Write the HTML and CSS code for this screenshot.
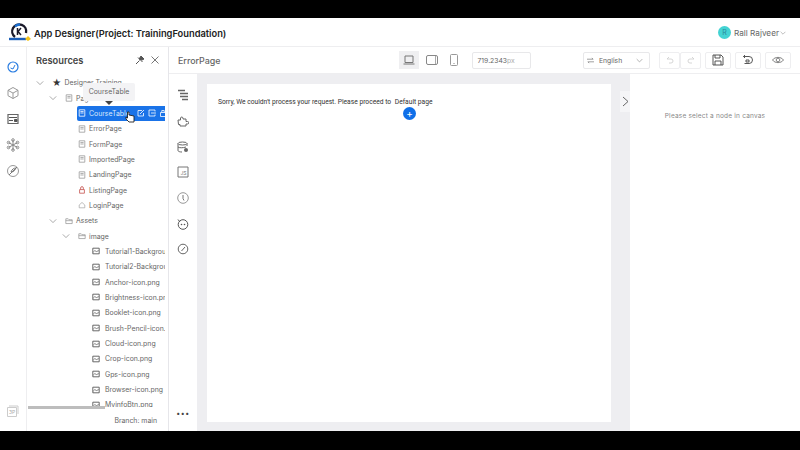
FILE: index.html
```html
<!DOCTYPE html>
<html>
<head lang="en">
    <meta charset="UTF-8">
    <title>App Designer</title>
    <link rel="stylesheet" href="styles.css">
</head>
<body>
<svg class="defs" width="0" height="0">
    <symbol id="chev" viewBox="0 0 10 10"><path d="M1 3l4 4 4-4" fill="none" stroke="#888" stroke-width=".9"/></symbol>
    <symbol id="page" viewBox="0 0 10 10"><path d="M1.500 1h7v8h-7zM3 3.200h4M3 5h4" fill="none" stroke="#999" stroke-width="1"/></symbol>
    <symbol id="folder" viewBox="0 0 10 10"><path d="M1 2.200h3l1 1.200h4v4.800H1zM1 4.600h8" fill="none" stroke="#888" stroke-width=".8"/></symbol>
    <symbol id="img" viewBox="0 0 10 10"><path d="M1 1.500h8v7H1z" fill="none" stroke="#555" stroke-width="1.100"/><path d="M1.500 6.500l2-2 2 1.200 3-1.200" fill="none" stroke="#666" stroke-width="1"/></symbol>
</svg>
<div class="bar"></div>
<div class="app">
    <header class="top">
        <svg class="logo" width="24" height="20" viewBox="0 0 24 20">
            <path d="M7 15a7 7 0 1 1 11-4" fill="none" stroke="#1a1a2a" stroke-width="2.400"/>
            <path d="M1 17h17" stroke="#1c5fb8" stroke-width="2.400"/>
            <path d="M7 4.500 a7 7 0 0 1 5-2" fill="none" stroke="#1c6fd0" stroke-width="2.400"/>
            <path d="M9.500 6v7M13 6l-3 3.500 3 3.500" fill="none" stroke="#1a1a2a" stroke-width="1.500"/>
            <path d="M17 17l3-3 3 3-3 2z" fill="#f2c21a"/>
        </svg>
        <h1 class="title">App Designer(Project: TrainingFoundation)</h1>
        <div class="user">
            <span class="avatar">R</span>
            <span class="user-name">Rall Rajveer</span>
            <svg width="6" height="6"><use href="#chev"/></svg>
        </div>
    </header>
    <div class="main">
        <nav class="rail">
            <svg class="rail-ico" width="14" height="14" viewBox="0 0 14 14"><circle cx="7" cy="7" r="5" fill="none" stroke="#2a7de1" stroke-width="1.200"/><path d="M4.500 8L7 9l2-4" fill="none" stroke="#2a7de1"/></svg>
            <svg class="rail-ico" width="14" height="14" viewBox="0 0 14 14"><path d="M7 1.500l5 2.800v5.400l-5 2.800-5-2.800V4.300zM2 4.300l5 2.800 5-2.800M7 7.100v5.400" fill="none" stroke="#999"/></svg>
            <svg class="rail-ico" width="14" height="14" viewBox="0 0 14 14"><path d="M2 2.500h10v9H2z" fill="none" stroke="#666" stroke-width="1.200"/><path d="M3 5.500h8M3 8.500h4M8.500 7.500h2.500v2H8.500z" stroke="#555" fill="#555" stroke-width="1"/></svg>
            <svg class="rail-ico" width="14" height="14" viewBox="0 0 14 14"><path d="M7 2v10M2.500 4.500l9 5M11.500 4.500l-9 5" stroke="#888"/><g fill="none" stroke="#777" stroke-width=".8"><circle cx="7" cy="2" r="1.300"/><circle cx="7" cy="12" r="1.300"/><circle cx="2.500" cy="4.500" r="1.300"/><circle cx="11.500" cy="4.500" r="1.300"/><circle cx="2.500" cy="9.500" r="1.300"/><circle cx="11.500" cy="9.500" r="1.300"/></g></svg>
            <svg class="rail-ico" width="14" height="14" viewBox="0 0 14 14"><circle cx="7" cy="7" r="5.500" fill="none" stroke="#999"/><path d="M3 11l8-8M5 8c1-3 3-4 5-4-1 2-2 4-5 4z" fill="none" stroke="#777"/></svg>
            <svg class="rail-ver" width="14" height="14" viewBox="0 0 14 14"><path d="M3 2h9v8" fill="none" stroke="#ccc"/><path d="M1.500 3.500h9v9h-9z" fill="#fff" stroke="#ccc"/><text x="3" y="10" font-size="5" fill="#aaa">3P</text></svg>
        </nav>
        <aside class="res">
            <div class="res-head">
                <h2>Resources</h2>
                <svg width="10" height="10" viewBox="0 0 10 10"><path d="M1 9l3.500-3.500M3 2.500l4.500 4.500M6 1l3 3-2 1-3-1z" stroke="#555" fill="#555"/></svg>
                <svg width="10" height="10" viewBox="0 0 10 10"><path d="M1.500 1.500l7 7M8.500 1.500l-7 7" stroke="#777"/></svg>
            </div>
            <div class="tree">
                <div class="row lvl0"><svg class="chev"><use href="#chev"/></svg><span class="star">★</span><span>Designer Training</span></div>
                <div class="row lvl1"><svg class="chev"><use href="#chev"/></svg><svg class="ico"><use href="#page"/></svg><span>Pages</span></div>
                <div class="row leaf sel"><svg class="ico"><use href="#page"/></svg><span class="sel-name">CourseTable</span>
                    <svg class="act" viewBox="0 0 8 8"><path d="M1 1.500h4M1 1.500v5.500h5.500V4M3 5l4-4" fill="none" stroke="#fff" stroke-width=".8"/></svg>
                    <svg class="act" viewBox="0 0 8 8"><path d="M1 1h6v1.500M1 1v6h6V5.500M3 4h5" fill="none" stroke="#fff" stroke-width=".8"/></svg>
                    <svg class="act" viewBox="0 0 8 8"><path d="M1.500 3.500h5v4h-5zM2.800 3.500V1.500h2.400v2" fill="none" stroke="#fff" stroke-width=".8"/></svg>
                </div>
                <div class="row leaf"><svg class="ico"><use href="#page"/></svg><span>ErrorPage</span></div>
                <div class="row leaf"><svg class="ico"><use href="#page"/></svg><span>FormPage</span></div>
                <div class="row leaf"><svg class="ico"><use href="#page"/></svg><span>ImportedPage</span></div>
                <div class="row leaf"><svg class="ico"><use href="#page"/></svg><span>LandingPage</span></div>
                <div class="row leaf"><svg class="ico" viewBox="0 0 10 10"><path d="M2 4.500h6v4.500H2zM3.300 4.500V2.500a1.700 1.700 0 0 1 3.400 0v2" fill="none" stroke="#c9615d" stroke-width="1.100"/></svg><span>ListingPage</span></div>
                <div class="row leaf"><svg class="ico" viewBox="0 0 10 10"><path d="M1.500 5L5 1.800 8.500 5v3.500h-7z" fill="none" stroke="#999" stroke-width=".8"/></svg><span>LoginPage</span></div>
                <div class="row lvl1"><svg class="chev"><use href="#chev"/></svg><svg class="ico"><use href="#folder"/></svg><span>Assets</span></div>
                <div class="row lvl2"><svg class="chev"><use href="#chev"/></svg><svg class="ico"><use href="#folder"/></svg><span>image</span></div>
                <div class="row file"><svg class="ico"><use href="#img"/></svg><span>Tutorial1-Background.png</span></div>
                <div class="row file"><svg class="ico"><use href="#img"/></svg><span>Tutorial2-Background.png</span></div>
                <div class="row file"><svg class="ico"><use href="#img"/></svg><span>Anchor-icon.png</span></div>
                <div class="row file"><svg class="ico"><use href="#img"/></svg><span>Brightness-icon.png</span></div>
                <div class="row file"><svg class="ico"><use href="#img"/></svg><span>Booklet-icon.png</span></div>
                <div class="row file"><svg class="ico"><use href="#img"/></svg><span>Brush-Pencil-icon.png</span></div>
                <div class="row file"><svg class="ico"><use href="#img"/></svg><span>Cloud-icon.png</span></div>
                <div class="row file"><svg class="ico"><use href="#img"/></svg><span>Crop-icon.png</span></div>
                <div class="row file"><svg class="ico"><use href="#img"/></svg><span>Gps-icon.png</span></div>
                <div class="row file"><svg class="ico"><use href="#img"/></svg><span>Browser-icon.png</span></div>
                <div class="row file"><svg class="ico"><use href="#img"/></svg><span>MyinfoBtn.png</span></div>
                <div class="scroll-v"></div>
            </div>
            <div class="scroll-h"></div>
            <div class="branch">Branch: main</div>
            <div class="tip">CourseTable</div>
            <svg class="cursor" width="10" height="12" viewBox="0 0 10 12"><path d="M2.500 1v6L1 6v2l3 3h5V5L4 4V1z" fill="#fff" stroke="#222" stroke-width=".9"/></svg>
        </aside>
        <section class="work">
            <div class="tools">
                <div class="page-name">ErrorPage</div>
                <div class="device on"><svg width="12" height="10" viewBox="0 0 12 10"><path d="M2 1h8v6.500H2zM.500 9h11" fill="none" stroke="#777"/></svg></div>
                <div class="device"><svg width="12" height="10" viewBox="0 0 12 10"><rect x=".5" y=".5" width="11" height="9" rx="1.500" fill="none" stroke="#888"/><path d="M9.500 1v8" stroke="#aaa"/></svg></div>
                <div class="device"><svg width="8" height="12" viewBox="0 0 8 12"><rect x=".5" y=".5" width="7" height="11" rx="1" fill="none" stroke="#999"/><path d="M3.500 9.500h1" stroke="#888"/></svg></div>
                <div class="size">719.2343<span>px</span></div>
                <div class="lang">
                    <svg width="7" height="7" viewBox="0 0 8 8"><path d="M0 2.500h7L5.500 1M8 5.500H1L2.500 7" fill="none" stroke="#777" stroke-width=".8"/></svg>
                    <span class="lang-name">English</span>
                    <svg width="7" height="7"><use href="#chev"/></svg>
                </div>
                <div class="undo-redo">
                    <div class="tbtn"><svg width="8" height="8" viewBox="0 0 8 8"><path d="M3 1L1 3h4a2 2 0 0 1 0 4H3" fill="none" stroke="#ccc" stroke-width=".8"/></svg></div>
                    <div class="tbtn"><svg width="8" height="8" viewBox="0 0 8 8"><path d="M5 1l2 2H3a2 2 0 0 0 0 4h2" fill="none" stroke="#ccc" stroke-width=".8"/></svg></div>
                </div>
                <div class="tbtn wide"><svg width="12" height="12" viewBox="0 0 12 12"><path d="M1 1h8l2 2v8H1zM3 1v3h5V1M3 11V7h6v4" fill="none" stroke="#444" stroke-width=".9"/></svg></div>
                <div class="tbtn wide"><svg width="12" height="12" viewBox="0 0 12 12"><path d="M3 1L1.500 2.500 3 4M1.500 2.500H7a3.500 3.500 0 0 1 0 7H2.500M4 6h3v2H4z" fill="none" stroke="#444" stroke-width=".9"/></svg></div>
                <div class="tbtn wide"><svg width="12" height="8" viewBox="0 0 12 8"><path d="M.500 4C3 .500 9 .500 11.500 4 9 7.500 3 7.500 .500 4z" fill="none" stroke="#666" stroke-width=".8"/><circle cx="6" cy="4" r="1.800" fill="none" stroke="#666" stroke-width=".8"/></svg></div>
            </div>
            <div class="editor">
                <div class="strip">
                    <svg width="12" height="12" viewBox="0 0 12 12"><path d="M1 1.500h7M3 4.500h8M3 7.500h8M5 10.500h6" stroke="#666" stroke-width="1.300"/></svg>
                    <svg width="12" height="12" viewBox="0 0 12 12"><path d="M1 5h2.500V3a1.300 1.300 0 0 1 2.500 0v1h3v2.500h1.500a1.200 1.200 0 0 1 0 2.500H9v2H3V9.500H1.500z" fill="none" stroke="#666"/></svg>
                    <svg width="12" height="12" viewBox="0 0 12 12"><ellipse cx="5.500" cy="2.500" rx="4.500" ry="1.500" fill="none" stroke="#666"/><path d="M1 2.500v7c0 1 2 1.500 4 1.500M10 2.500V5M1 6c1 1 5 1 8 0" fill="none" stroke="#666"/><circle cx="9" cy="9" r="2" fill="#666"/></svg>
                    <svg width="12" height="12" viewBox="0 0 12 12"><path d="M1 1h10v10H1z" fill="none" stroke="#777"/><text x="3.500" y="8.500" font-size="5" fill="#777">JS</text></svg>
                    <svg width="12" height="12" viewBox="0 0 12 12"><circle cx="6" cy="6" r="5.300" fill="none" stroke="#999"/><path d="M6 3v3.500l1 2" fill="none" stroke="#777"/></svg>
                    <svg width="12" height="12" viewBox="0 0 12 12"><circle cx="6" cy="6.500" r="4.800" fill="none" stroke="#555"/><path d="M1 1.500l2 2.500" stroke="#555"/><circle cx="4.500" cy="6.500" r=".8" fill="#555"/><circle cx="7.500" cy="6.500" r=".8" fill="#555"/></svg>
                    <svg width="12" height="12" viewBox="0 0 12 12"><circle cx="6" cy="6" r="4.800" fill="none" stroke="#666"/><path d="M4.500 8L8 4" stroke="#666"/></svg>
                    <div class="dots">•••</div>
                </div>
                <div class="stage">
                    <div class="sheet">
                        <p class="msg">Sorry, We couldn't process your request. Please proceed to <span class="dflt">Default page</span></p>
                        <div class="plus">+</div>
                    </div>
                    <div class="tab"><svg width="7" height="11" viewBox="0 0 7 11"><path d="M1 1l5 4.500-5 4.500" fill="none" stroke="#666"/></svg></div>
                </div>
                <div class="props">Please select a node in canvas</div>
            </div>
        </section>
    </div>
</div>
<div class="bar bottom"></div>
</body>
</html>
```

FILE: styles.css
```css
*{
    box-sizing: border-box;
    margin: 0;
    padding: 0;
}
html,body{
    width: 800px;
    height: 450px;
    overflow: hidden;
    background: #000;
    font-family: Inter, "Liberation Sans", sans-serif;
    color: #555;
}
.defs{
    position: absolute;
}
.bar{
    height: 18px;
    background: #000;
}
.bar.bottom{
    height: 19px;
}
.app{
    height: 413px;
    background: #fff;
    display: flex;
    flex-direction: column;
}
.top{
    height: 28.5px;
    flex: none;
    display: flex;
    align-items: center;
    padding: 0 14px 0 8px;
    border-bottom: 1px solid #eeeef0;
}
.logo{
    margin-right: 2px;
}
.title{
    font-size: 9.3px;
    font-weight: 600;
    color: #222;
    flex: 1;
    padding-top: 3px;
}
.user{
    display: flex;
    align-items: center;
    font-size: 8.2px;
    color: #666;
    padding-top: 2px;
}
.avatar{
    width: 13px;
    height: 13px;
    border-radius: 50%;
    background: #43d3d3;
    color: #2a8a9a;
    font-size: 7px;
    line-height: 13px;
    text-align: center;
    margin-right: 3px;
}
.user-name{
    margin-right: 1px;
}
.main{
    flex: 1;
    display: flex;
    min-height: 0;
}
.rail{
    width: 27px;
    flex: none;
    display: flex;
    flex-direction: column;
    align-items: center;
    gap: 12px;
    padding: 13.5px 0 13px;
    border-right: 1px solid #eeeef0;
}
.rail-ver{
    margin-top: auto;
}
.res{
    width: 142px;
    flex: none;
    display: flex;
    flex-direction: column;
    position: relative;
    border-right: 1px solid #e6e6ea;
}
.res-head{
    height: 28.5px;
    flex: none;
    display: flex;
    align-items: center;
    gap: 5px;
    padding: 0 8px 1px 9px;
}
.res-head h2{
    font-size: 9.3px;
    font-weight: 600;
    color: #444;
    flex: 1;
}
.tree{
    flex: 1;
    overflow: hidden;
    position: relative;
    margin-right: 3px;
    min-height: 0;
}
.row{
    height: 15.35px;
    display: flex;
    align-items: center;
    font-size: 6.9px;
    color: #666;
    white-space: nowrap;
    overflow: hidden;
}
.chev{
    width: 8px;
    height: 8px;
    flex: none;
    margin-right: 8px;
}
.ico{
    width: 8px;
    height: 8px;
    flex: none;
    margin-right: 3px;
}
.star{
    color: #333;
    font-size: 9px;
    margin-right: 3px;
}
.lvl0{
    padding-left: 9px;
}
.lvl1{
    padding-left: 22px;
}
.lvl2{
    padding-left: 35px;
}
.leaf{
    padding-left: 51px;
}
.file{
    padding-left: 65px;
}
.file .ico{
    margin-right: 5px;
}
.sel{
    margin-left: 50px;
    padding-left: 1px;
    background: #1a73e8;
    color: #dce9fb;
    border-radius: 2px 0 0 2px;
}
.sel .ico{
    filter: brightness(1.7);
}
.sel-name{
    width: 45px;
    overflow: hidden;
    flex: none;
    margin-right: 3px;
}
.act{
    width: 8px;
    height: 8px;
    flex: none;
    margin-right: 3px;
}
.scroll-v{
    position: absolute;
    right: -3px;
    top: 0;
    width: 3px;
    height: 211px;
    background: #c4c4c4;
}
.scroll-h{
    position: absolute;
    left: 1px;
    bottom: 22px;
    width: 77px;
    height: 3px;
    background: #bdbdbd;
}
.branch{
    height: 24px;
    flex: none;
    font-size: 6.9px;
    text-align: right;
    padding: 9px 11px 0 0;
    color: #666;
}
.tip{
    position: absolute;
    left: 56px;
    top: 36.500px;
    width: 52px;
    height: 18px;
    background: #f3f3f5;
    font-size: 6.9px;
    line-height: 17px;
    text-align: center;
    color: #666;
    border-radius: 2px;
}
.tip:after{
    content: "";
    position: absolute;
    left: 22px;
    top: 18px;
    border: 4px solid transparent;
    border-top: 4px solid #444;
}
.cursor{
    position: absolute;
    left: 98px;
    top: 64px;
}
.work{
    flex: 1;
    display: flex;
    flex-direction: column;
    min-width: 0;
}
.tools{
    height: 27.5px;
    flex: none;
    display: flex;
    align-items: center;
    padding: 1px 9px 0 9px;
    border-bottom: 1px solid #eeeef0;
}
.page-name{
    font-size: 8.9px;
    font-weight: 500;
    color: #666;
    width: 221px;
    flex: none;
}
.device{
    width: 20px;
    height: 18px;
    margin-right: 2.500px;
    display: flex;
    align-items: center;
    justify-content: center;
}
.device.on{
    background: #efeff1;
}
.size{
    margin-left: 5px;
    width: 59px;
    height: 17px;
    border: 1px solid #e8e8ea;
    border-radius: 2px;
    font-size: 6.8px;
    line-height: 15px;
    padding-left: 5px;
    color: #666;
}
.size span{
    color: #aaa;
}
.lang{
    margin-left: 52.5px;
    width: 67px;
    height: 17px;
    border: 1px solid #e8e8ea;
    border-radius: 2px;
    display: flex;
    align-items: center;
    font-size: 6.8px;
    padding: 0 6px 0 3px;
    color: #666;
}
.lang-name{
    flex: 1;
    margin-left: 5px;
}
.undo-redo{
    display: flex;
    margin-left: 9px;
}
.tbtn{
    width: 21px;
    height: 17px;
    border: 1px solid #eeeef0;
    border-radius: 2px;
    display: flex;
    align-items: center;
    justify-content: center;
}
.tbtn.wide{
    width: 26px;
    margin-left: 4px;
}
.editor{
    flex: 1;
    display: flex;
    min-height: 0;
}
.strip{
    width: 28px;
    flex: none;
    display: flex;
    flex-direction: column;
    align-items: center;
    gap: 13.700px;
    padding: 15.3px 0 12px;
}
.dots{
    margin-top: auto;
    font-size: 7px;
    line-height: 10px;
    letter-spacing: .5px;
    color: #444;
}
.stage{
    width: 433px;
    flex: none;
    background: #eeeef1;
    padding: 10px 19px 9px 10px;
    position: relative;
}
.sheet{
    height: 100%;
    background: #fff;
    padding: 13.5px 11px;
}
.msg{
    font-family: Roboto, "Liberation Sans", sans-serif;
    font-size: 6.7px;
    line-height: 9px;
    color: #333;
    white-space: nowrap;
}
.dflt{
    margin-left: 2px;
}
.plus{
    width: 13px;
    height: 13px;
    margin: 0 0 0 185px;
    border-radius: 50%;
    background: #0f6fe8;
    color: #fff;
    font-size: 10px;
    line-height: 13px;
    text-align: center;
}
.tab{
    position: absolute;
    right: 0;
    top: 17px;
    width: 10px;
    height: 21px;
    background: #f5f5f7;
    display: flex;
    align-items: center;
    justify-content: center;
}
.props{
    flex: 1;
    font-size: 6.5px;
    letter-spacing: .2px;
    color: #888;
    text-align: center;
    padding-top: 38px;
}
```
